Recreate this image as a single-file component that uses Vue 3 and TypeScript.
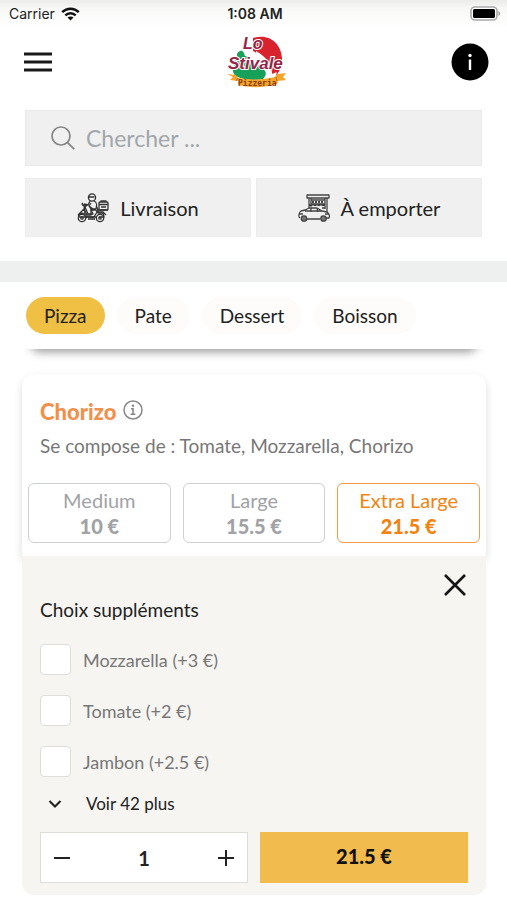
<script setup lang="ts">
import { computed, ref } from 'vue'

interface Size {
  name: string
  price: number
}

interface Extra {
  name: string
  price: number
  checked: boolean
}

const categories = ['Pizza', 'Pate', 'Dessert', 'Boisson']
const activeCategory = ref('Pizza')
const search = ref('')

const sizes: Size[] = [
  { name: 'Medium', price: 10 },
  { name: 'Large', price: 15.5 },
  { name: 'Extra Large', price: 21.5 },
]
const selectedIndex = ref(2)

const extras = ref<Extra[]>([
  { name: 'Mozzarella', price: 3, checked: false },
  { name: 'Tomate', price: 2, checked: false },
  { name: 'Jambon', price: 2.5, checked: false },
])

const quantity = ref(1)
const panelOpen = ref(true)

const total = computed(() => {
  const added = extras.value.reduce((sum, e) => sum + (e.checked ? e.price : 0), 0)
  return (sizes[selectedIndex.value].price + added) * quantity.value
})

function choose(index: number) {
  selectedIndex.value = index
  panelOpen.value = true
}
</script>

<template>
  <div class="app">
    <div class="status">
      <div class="carrier">
        <span>Carrier</span>
        <svg width="19" height="14" viewBox="0 0 19 14" aria-hidden="true">
          <g fill="none" stroke="#111" stroke-width="2.5">
            <path d="M1.2 5.2C5.9.5 13.1.5 17.8 5.2" />
            <path d="M4.3 8.4c3-2.9 7.4-2.9 10.4 0" />
          </g>
          <path d="M9.5 13.6 6.5 10.6c1.7-1.6 4.3-1.6 6 0z" fill="#111" />
        </svg>
      </div>
      <time class="clock">1:08 AM</time>
      <svg class="battery" width="31" height="16" viewBox="0 0 31 16" aria-hidden="true">
        <rect x="1" y="1" width="26" height="13" rx="4" fill="#fff" stroke="#aaa" stroke-width="1.6" />
        <rect x="3" y="3" width="22" height="9" rx="1.5" fill="#000" />
        <path d="M28.4 5c2.4 1 2.4 4 0 5z" fill="#aaa" />
      </svg>
    </div>

    <header class="header">
      <button class="icon-button" aria-label="Menu">
        <svg width="28" height="20" viewBox="0 0 28 20">
          <path d="M0 2h28M0 10h28M0 18h28" stroke="#1b1b1b" stroke-width="3" />
        </svg>
      </button>
      <svg class="logo" width="62" height="56" viewBox="0 0 62 56" role="img" aria-label="Lo Stivale Pizzeria">
        <path d="M27 4C43-1 55 9 56 24c0 9-3 16-9 20-1-10-7-20-20-27z" fill="#d8232e" />
        <path d="M9 31c-1-4 1-6 3-7-2-3-1-6 2-7 3-1 4 2 5 5 4 0 5 4 9 7 3 3 8 3 11 8 2 3 0 6-2 8-9 2-20 1-27-3-4-3-4-8-1-11z" fill="#17a05a" />
        <path d="M30 17c9 5 15 12 16 22l-6-3-9-8zM46 40l5-2-2 6h-3z" fill="#fff" />
        <path d="M1 40l9 1 2 3c12 2 25 2 37-1l2-3 9-1-3 4 3 3-8 1-1 3c-13 4-27 4-39 1v-4l-8-1 3-3z" fill="#f2a42c" />
        <path d="M12 44l-2 3M50 43l1 4" stroke="#b96d14" fill="none" />
        <g fill="#942448" stroke="#fff" stroke-width="2" paint-order="stroke" font-family="Liberation Sans, sans-serif" font-weight="700" font-style="italic">
          <text x="17" y="15" font-size="16">Lo</text>
          <text x="2" y="35" font-size="17">Stivale</text>
        </g>
        <text x="12" y="52" font-size="8" fill="#8b3d12" font-family="DejaVu Sans Mono, monospace" font-weight="700">Pizzeria</text>
      </svg>
      <button class="icon-button" aria-label="Informations">
        <svg width="38" height="38" viewBox="0 0 38 38">
          <circle cx="19" cy="19" r="18.5" fill="#000" />
          <circle cx="19" cy="12.500" r="1.7" fill="#fff" />
          <path d="M19 16.5V27" stroke="#fff" stroke-width="2.4" />
        </svg>
      </button>
    </header>

    <section class="tools">
      <label class="search">
        <svg width="24" height="24" viewBox="0 0 24 24" fill="none" stroke="#858585" stroke-width="1.7" aria-hidden="true">
          <circle cx="10" cy="10" r="9" />
          <path d="m16.4 16.4 6.8 6.8" />
        </svg>
        <input v-model="search" type="text" placeholder="Chercher ..." aria-label="Chercher" />
      </label>
      <div class="modes">
        <button class="mode">
          <svg width="32" height="30" viewBox="0 0 32 30" fill="none" stroke="#333" stroke-width="1.3" stroke-linejoin="round" aria-hidden="true">
            <circle cx="15" cy="4.5" r="3.6" />
            <path d="M11.5 4h6M13 8l-2 4-4-1M17 8c3 1 3 5 2 8h-5l-2-3M14 10l-2 3 4 3M6 10l-1 1 2 2 1 8M5 12h5l-2 2 3 7h5l-2-4h5l2 3h5l1 4h-5M19 13l2 3v4" />
            <path d="M14 16v6h-4l-3-6-5 5c-1 2 0 3 1 3h14l3-5h6l3 3" />
            <rect x="22" y="9" width="9" height="8" rx="1" />
            <path d="M22 11.5h9M24 9V8h5v1M20 17h11M24 14h5" />
            <circle cx="5" cy="25" r="3.7" /><circle cx="5" cy="25" r="1.2" />
            <circle cx="23" cy="25" r="3.7" /><circle cx="23" cy="25" r="1.2" />
            <path d="M9 24h10M11 26h7M1 22c3-3 7-2 9 2" />
          </svg>
          <span>Livraison</span>
        </button>
        <button class="mode">
          <svg width="32" height="28" viewBox="0 0 32 28" fill="none" stroke="#444" stroke-width="1.3" stroke-linejoin="round" aria-hidden="true">
            <path d="M9 1h22v3H9zM11 4v10M29 4v16M13 4v9M27 4v11M13 6h14v4H13M11 10c1 2 3 2 4 0 1 2 3 2 4 0 1 2 3 2 4 0 1 2 3 2 4 0M24 14h3" />
            <path d="M14 8h12" stroke-width="1.800" stroke-dasharray="2 1" />
            <path d="M2 24c-2-1-1-6 1-7l4-1 4-2h8l5 3 5 1c2 1 3 4 2 6h-3M9 25h13M7 17h17M13 14v4M19 14l1 4M1 20h4M27 20h4" fill="#f0f0f0" />
            <circle cx="6" cy="24.5" r="2.7" fill="#777" />
            <circle cx="25.500" cy="24.5" r="2.7" fill="#777" />
          </svg>
          <span>À emporter</span>
        </button>
      </div>
    </section>

    <nav class="tabs" aria-label="Catégories">
      <button
        v-for="category in categories"
        :key="category"
        class="tab"
        :class="{ active: category === activeCategory }"
        @click="activeCategory = category"
      >
        {{ category }}
      </button>
    </nav>

    <main class="list">
      <div class="list-edge"></div>
      <article class="card">
        <div class="intro">
          <h2 class="title">
            Chorizo
            <svg width="20" height="24" viewBox="0 0 20 24" aria-hidden="true">
              <circle cx="10" cy="10" r="9" fill="none" stroke="#888" stroke-width="1.5" />
              <circle cx="10" cy="5.800" r="1.2" fill="#888" />
              <path d="M8 8.800h2V14M7.600 14.200h4.800" fill="none" stroke="#888" stroke-width="1.6" />
            </svg>
          </h2>
          <p class="description">Se compose de : Tomate, Mozzarella, Chorizo</p>
        </div>
        <div class="sizes">
          <button
            v-for="(size, index) in sizes"
            :key="size.name"
            class="size"
            :class="{ active: index === selectedIndex }"
            :aria-pressed="index === selectedIndex"
            @click="choose(index)"
          >
            <span>{{ size.name }}</span>
            <strong>{{ size.price }} €</strong>
          </button>
        </div>
      </article>

      <section v-if="panelOpen" class="panel">
        <button class="icon-button close" aria-label="Fermer" @click="panelOpen = false">
          <svg width="22" height="22" viewBox="0 0 22 22">
            <path d="m1 1 20 20M21 1 1 21" stroke="#151515" stroke-width="2.6" />
          </svg>
        </button>
        <h3 class="subtitle">Choix suppléments</h3>
        <div class="extras">
          <label v-for="extra in extras" :key="extra.name" class="extra">
            <input v-model="extra.checked" type="checkbox" />
            <span>{{ extra.name }} (+{{ extra.price }} €)</span>
          </label>
        </div>
        <button class="more">
          <svg width="14" height="10" viewBox="0 0 14 10" aria-hidden="true">
            <path d="m1.500 2 5.500 5.500L12.500 2" fill="none" stroke="#222" stroke-width="2.1" />
          </svg>
          <span>Voir 42 plus</span>
        </button>
        <div class="order">
          <div class="stepper">
            <button class="step" aria-label="Diminuer" @click="quantity = Math.max(1, quantity - 1)">
              <svg width="16" height="16" viewBox="0 0 16 16"><path d="M0 8h16" stroke="#222" stroke-width="2" /></svg>
            </button>
            <output>{{ quantity }}</output>
            <button class="step" aria-label="Augmenter" @click="quantity++">
              <svg width="16" height="16" viewBox="0 0 16 16"><path d="M0 8h16M8 0v16" stroke="#222" stroke-width="2" /></svg>
            </button>
          </div>
          <button class="buy">{{ total }} €</button>
        </div>
      </section>
    </main>
  </div>
</template>

<style>
body {
  margin: 0;
  background: #fff;
}
</style>

<style scoped>
.app {
  font-family: Lato, sans-serif;
  font-size: 20px;
  line-height: 24px;
  color: #222;
}

.app * {
  box-sizing: border-box;
}

button {
  padding: 0;
  border: 0;
  background: none;
  color: inherit;
  font: inherit;
  cursor: pointer;
}

svg {
  display: block;
  flex: none;
}

.status {
  display: grid;
  grid-template-columns: 1fr auto 1fr;
  align-items: center;
  height: 28px;
  padding: 0 6px 0 9px;
  background: linear-gradient(#ebebea, #f8f8f7 30%, #fff);
  font-family: Inter, sans-serif;
  font-size: 14px;
}

.carrier {
  display: flex;
  align-items: center;
  gap: 6px;
}

.clock {
  font-weight: 600;
}

.battery {
  justify-self: end;
}

.header {
  display: grid;
  grid-template-columns: 1fr auto 1fr;
  align-items: center;
  height: 68px;
  padding: 0 18px 0 24px;
}

.icon-button {
  justify-self: start;
}

.icon-button:last-child {
  justify-self: end;
}

.tools {
  display: flex;
  flex-direction: column;
  gap: 12px;
  padding: 14px 25px 24px;
  border-bottom: 21px solid #eef0f0;
}

.search {
  display: flex;
  align-items: center;
  gap: 11px;
  height: 56px;
  padding: 0 25px;
  border: 1px solid #e9e9e9;
  background: #f0f0f0;
}

.search input {
  flex: 1;
  min-width: 0;
  padding: 0;
  border: 0;
  outline: 0;
  background: none;
  font: inherit;
  font-size: 23px;
}

.search input::placeholder {
  color: #a1a7aa;
  opacity: 1;
}

.modes {
  display: grid;
  grid-template-columns: 1fr 1fr;
  gap: 5px;
}

.mode {
  display: flex;
  align-items: center;
  justify-content: center;
  gap: 11px;
  height: 59px;
  border: 1px solid #ededed;
  background: #f0f0f0;
}

.tabs {
  display: flex;
  gap: 12px;
  padding: 15px 26px;
}

.tab {
  height: 37px;
  padding: 0 18px;
  border-radius: 19px;
  background: #fdfcfb;
  font-size: 19px;
}

.tab.active {
  background: #efc043;
}

.list {
  padding: 0 21px 0 22px;
}

.list-edge {
  height: 25px;
  overflow: hidden;
}

.list-edge::before {
  content: '';
  display: block;
  height: 20px;
  margin: -20px 8px 0;
  border-radius: 10px;
  box-shadow: 0 3px 10px rgba(0, 0, 0, 0.4);
}

.card {
  padding: 26px 6px 13px;
  border-radius: 12px 12px 0 0;
  background: #fff;
  box-shadow: 0 4px 8px rgba(0, 0, 0, 0.14);
}

.intro {
  padding: 0 12px;
}

.title {
  display: flex;
  align-items: center;
  gap: 7px;
  margin: 0;
  color: #ef914d;
  font-size: 22px;
  font-weight: 900;
}

.description {
  margin: 10px 0 25px;
  color: #777;
  font-size: 19px;
}

.sizes {
  display: grid;
  grid-template-columns: repeat(3, 1fr);
  gap: 12px;
}

.size {
  display: flex;
  flex-direction: column;
  align-items: center;
  height: 60px;
  padding-top: 3px;
  border: 1px solid #cfd0d2;
  border-radius: 6px;
  color: #a0a2a6;
  line-height: 26px;
}

.size.active {
  border-color: #f19a45;
  color: #f28313;
}

.size strong {
  font-weight: 900;
}

.panel {
  position: relative;
  padding: 42px 18px 12px;
  border-radius: 0 0 12px 12px;
  background: #f6f5f1;
}

.close {
  position: absolute;
  top: 18px;
  right: 20px;
}

.subtitle {
  margin: 0 0 22px;
  font-size: 19px;
  font-weight: 400;
}

.extras {
  display: flex;
  flex-direction: column;
  gap: 20px;
}

.extra {
  display: flex;
  align-items: center;
  gap: 12px;
  color: #777;
  font-size: 18px;
}

.extra input {
  appearance: none;
  width: 31px;
  height: 31px;
  margin: 0;
  border: 1px solid #deded9;
  border-radius: 4px;
  background: #fff;
}

.extra input:checked {
  background: #efc043;
}

.more {
  display: flex;
  align-items: center;
  gap: 24px;
  margin: 15px 0 16px;
  padding: 0 8px;
  font-size: 17px;
}

.order {
  display: grid;
  grid-template-columns: 1fr 1fr;
  gap: 12px;
}

.stepper {
  display: flex;
  align-items: center;
  justify-content: space-between;
  height: 51px;
  border: 1px solid #deded9;
  background: #fff;
  font-weight: 700;
}

.step {
  padding: 13px;
}

.buy {
  height: 51px;
  padding-bottom: 4px;
  background: #f1bb4d;
  color: #111;
  font-weight: 900;
}
</style>
